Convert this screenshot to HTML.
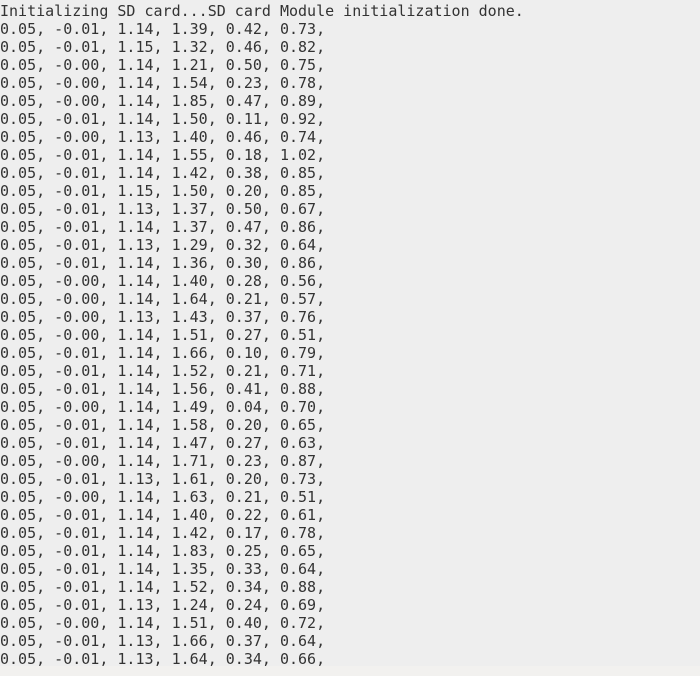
<!DOCTYPE html>
<html><head><meta charset="utf-8"><style>
html,body{margin:0;padding:0;width:700px;height:676px;overflow:hidden;background:#eeeeee;}
pre{margin:0;padding:2px 0 0 0;font-family:"DejaVu Sans Mono","Liberation Mono",monospace;font-size:15px;line-height:18px;color:#333;}
.bot{position:absolute;left:0;top:666px;width:700px;height:10px;background:#f2f1ef;}
</style></head><body><pre>Initializing SD card...SD card Module initialization done.
0.05, -0.01, 1.14, 1.39, 0.42, 0.73,
0.05, -0.01, 1.15, 1.32, 0.46, 0.82,
0.05, -0.00, 1.14, 1.21, 0.50, 0.75,
0.05, -0.00, 1.14, 1.54, 0.23, 0.78,
0.05, -0.00, 1.14, 1.85, 0.47, 0.89,
0.05, -0.01, 1.14, 1.50, 0.11, 0.92,
0.05, -0.00, 1.13, 1.40, 0.46, 0.74,
0.05, -0.01, 1.14, 1.55, 0.18, 1.02,
0.05, -0.01, 1.14, 1.42, 0.38, 0.85,
0.05, -0.01, 1.15, 1.50, 0.20, 0.85,
0.05, -0.01, 1.13, 1.37, 0.50, 0.67,
0.05, -0.01, 1.14, 1.37, 0.47, 0.86,
0.05, -0.01, 1.13, 1.29, 0.32, 0.64,
0.05, -0.01, 1.14, 1.36, 0.30, 0.86,
0.05, -0.00, 1.14, 1.40, 0.28, 0.56,
0.05, -0.00, 1.14, 1.64, 0.21, 0.57,
0.05, -0.00, 1.13, 1.43, 0.37, 0.76,
0.05, -0.00, 1.14, 1.51, 0.27, 0.51,
0.05, -0.01, 1.14, 1.66, 0.10, 0.79,
0.05, -0.01, 1.14, 1.52, 0.21, 0.71,
0.05, -0.01, 1.14, 1.56, 0.41, 0.88,
0.05, -0.00, 1.14, 1.49, 0.04, 0.70,
0.05, -0.01, 1.14, 1.58, 0.20, 0.65,
0.05, -0.01, 1.14, 1.47, 0.27, 0.63,
0.05, -0.00, 1.14, 1.71, 0.23, 0.87,
0.05, -0.01, 1.13, 1.61, 0.20, 0.73,
0.05, -0.00, 1.14, 1.63, 0.21, 0.51,
0.05, -0.01, 1.14, 1.40, 0.22, 0.61,
0.05, -0.01, 1.14, 1.42, 0.17, 0.78,
0.05, -0.01, 1.14, 1.83, 0.25, 0.65,
0.05, -0.01, 1.14, 1.35, 0.33, 0.64,
0.05, -0.01, 1.14, 1.52, 0.34, 0.88,
0.05, -0.01, 1.13, 1.24, 0.24, 0.69,
0.05, -0.00, 1.14, 1.51, 0.40, 0.72,
0.05, -0.01, 1.13, 1.66, 0.37, 0.64,
0.05, -0.01, 1.13, 1.64, 0.34, 0.66,</pre><div class="bot"></div></body></html>
